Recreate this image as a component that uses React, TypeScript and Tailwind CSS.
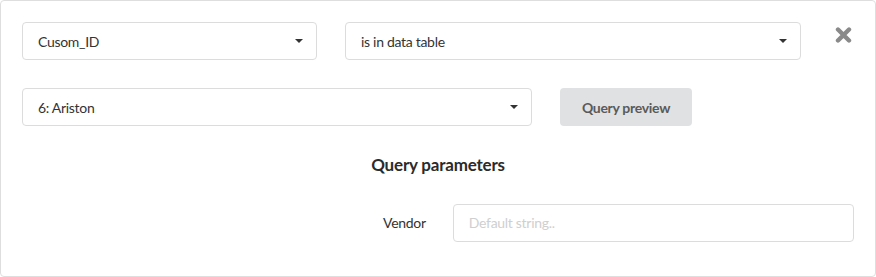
import React from "react"

function Caret() {
  return (
    <svg width="8" height="4" viewBox="0 0 8 4" className="shrink-0">
      <path d="M0 0 L8 0 L4 4 Z" fill="#333" />
    </svg>
  )
}

function Select({ value, className }: { value: string; className: string }) {
  return (
    <div
      className={`flex h-[38px] items-center justify-between rounded border border-[#dcdcdc] bg-white pl-[15px] pr-[13px] text-[14px] tracking-[-0.3px] text-[#333] ${className}`}
    >
      <span>{value}</span>
      <Caret />
    </div>
  )
}

export default function App() {
  return (
    <div
      className="h-[277px] w-[876px] bg-white"
      style={{ fontFamily: "Lato, 'Open Sans', sans-serif" }}
    >
      <div className="flex h-full w-full flex-col rounded-[4px] border border-[#dedede] px-[21px] pt-[21px]">
        <div className="flex items-start">
          <Select value="Cusom_ID" className="w-[295px]" />
          <Select value="is in data table" className="ml-[28px] w-[456px]" />
          <button className="ml-[33px] mt-[5px] flex h-[16px] w-[18px] items-center justify-center">
            <svg width="17" height="16" viewBox="0 0 17 16">
              <path d="M3 2.5 L14 13.5 M14 2.5 L3 13.5" stroke="#8a8a8a" strokeWidth="4.4" strokeLinecap="round" />
            </svg>
          </button>
        </div>

        <div className="mt-[28px] flex items-start">
          <Select value="6: Ariston" className="w-[510px]" />
          <button className="ml-[28px] h-[38px] w-[132px] rounded bg-[#e0e1e2] text-[14px] font-bold tracking-[-0.3px] text-[#5a5a5a]">
            Query preview
          </button>
        </div>

        <h2 className="mt-[26px] text-center text-[17px] font-bold tracking-[-0.2px] text-[#2b2b2b]">Query parameters</h2>

        <div className="mt-[26px] flex items-center">
          <label className="ml-[361px] w-[70px] text-[14px] tracking-[-0.3px] text-[#333]">Vendor</label>
          <input
            placeholder="Default string.."
            className="h-[38px] w-[402px] rounded border border-[#dcdcdc] px-[15px] text-[14px] tracking-[-0.3px] text-[#333] outline-none placeholder:text-[#cfcfcf]"
          />
        </div>
      </div>
    </div>
  )
}
